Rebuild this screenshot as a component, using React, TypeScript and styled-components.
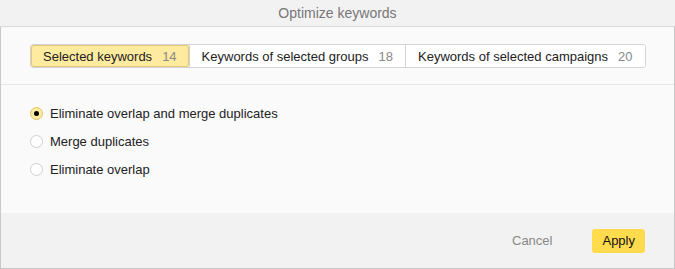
import * as React from 'react'
import styled, { createGlobalStyle } from 'styled-components'

const GlobalStyle = createGlobalStyle`
  body {
    margin: 0;
    font-family: 'Liberation Sans', Arial, sans-serif;
    background: #fff;
  }
`

const Dialog = styled.div`
  width: 675px;
  height: 269px;
  box-sizing: border-box;
  display: flex;
  flex-direction: column;
  border: 1px solid #c8c8c8;
  border-top: none;
  background: #fafafa;
`

const Header = styled.div`
  height: 27px;
  box-sizing: border-box;
  display: flex;
  align-items: center;
  justify-content: center;
  background: #f2f2f2;
  border-bottom: 1px solid #dadada;
  color: #777;
  font-size: 14px;
  margin: 0 -1px;
`

const TabsSection = styled.div`
  padding: 17px 0 16px 29px;
  border-bottom: 1px solid #e6e6e6;
`

const Tabs = styled.div`
  display: inline-flex;
  border: 1px solid #d4d4d4;
  border-radius: 3px;
  background: #fff;
  overflow: hidden;
`

const Tab = styled.div<{ active?: boolean }>`
  height: 22px;
  display: flex;
  align-items: center;
  padding: 0 12px;
  font-size: 13px;
  color: #222;
  background: ${(p) => (p.active ? '#ffeba0' : '#fff')};
  box-shadow: ${(p) => (p.active ? 'inset 0 0 0 1px #e2c870' : 'none')};
  border-radius: ${(p) => (p.active ? '3px' : '0')};
  & + & {
    border-left: 1px solid #d4d4d4;
  }
`

const Count = styled.span`
  margin-left: 10px;
  color: #888;
`

const Options = styled.div`
  flex: 1;
  padding: 14px 0 0 29px;
`

const Option = styled.label`
  display: flex;
  align-items: center;
  height: 28px;
  font-size: 13px;
  color: #222;
`

const Radio = styled.span<{ checked?: boolean }>`
  width: 11px;
  height: 11px;
  border-radius: 50%;
  margin-right: 7px;
  display: flex;
  align-items: center;
  justify-content: center;
  background: ${(p) => (p.checked ? '#ffeba0' : '#fff')};
  border: 1px solid ${(p) => (p.checked ? '#e0c466' : '#cfcfcf')};
  &::after {
    content: '';
    display: ${(p) => (p.checked ? 'block' : 'none')};
    width: 5px;
    height: 5px;
    border-radius: 50%;
    background: #000;
  }
`

const Footer = styled.div`
  height: 55px;
  display: flex;
  align-items: center;
  justify-content: flex-end;
  gap: 40px;
  padding-right: 29px;
  background: #f2f2f2;
`

const CancelButton = styled.button`
  border: none;
  background: none;
  padding: 0;
  font: inherit;
  font-size: 13px;
  color: #888;
`

const ApplyButton = styled.button`
  border: none;
  background: #ffdb4d;
  border-radius: 3px;
  height: 24px;
  padding: 0 10px;
  font: inherit;
  font-size: 13px;
  color: #111;
`

const tabs = [
  { label: 'Selected keywords', count: 14 },
  { label: 'Keywords of selected groups', count: 18 },
  { label: 'Keywords of selected campaigns', count: 20 },
]

const options = ['Eliminate overlap and merge duplicates', 'Merge duplicates', 'Eliminate overlap']

export default function App() {
  return (
    <>
      <GlobalStyle />
      <Dialog>
        <Header>Optimize keywords</Header>
        <TabsSection>
          <Tabs>
            {tabs.map((t, i) => (
              <Tab key={t.label} active={i === 0}>
                {t.label}
                <Count>{t.count}</Count>
              </Tab>
            ))}
          </Tabs>
        </TabsSection>
        <Options>
          {options.map((o, i) => (
            <Option key={o}>
              <Radio checked={i === 0} />
              {o}
            </Option>
          ))}
        </Options>
        <Footer>
          <CancelButton>Cancel</CancelButton>
          <ApplyButton>Apply</ApplyButton>
        </Footer>
      </Dialog>
    </>
  )
}
